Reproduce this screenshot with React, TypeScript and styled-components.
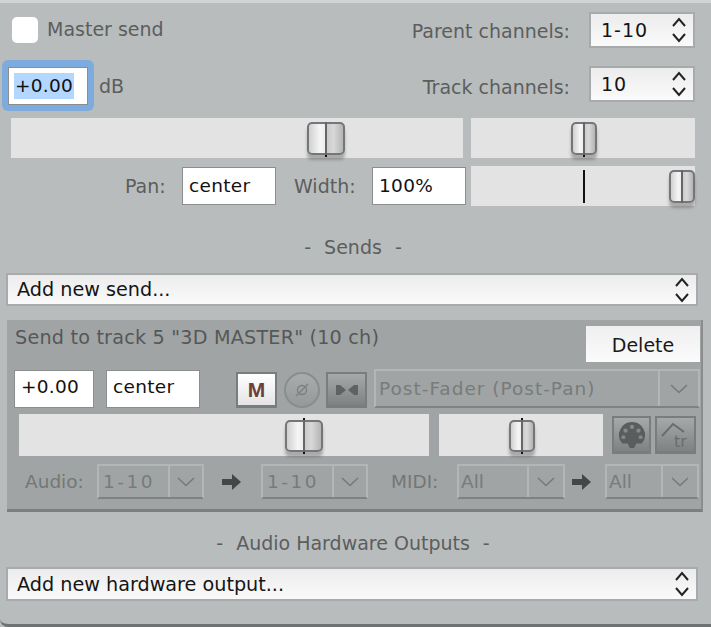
import React from 'react';
import styled, { createGlobalStyle } from 'styled-components';

const GlobalStyle = createGlobalStyle`
  html, body {
    margin: 0;
    padding: 0;
    background: #b9bcbc;
  }
  body {
    font-family: "DejaVu Sans", "Open Sans", sans-serif;
    font-size: 19px;
  }
`;

const Window = styled.div`
  position: relative;
  width: 711px;
  height: 627px;
  box-sizing: border-box;
  overflow: hidden;
  background: #b9bcbc;
  border-top: 3px solid #d2d3d3;
  padding-top: 9px;
`;

const BottomEdge = styled.div`
  position: absolute;
  left: 0;
  right: 0;
  bottom: 0;
  height: 12px;
  border-bottom: 3px solid #6f7272;
  border-bottom-left-radius: 8px;
  box-sizing: border-box;
`;

const TopRows = styled.div`
  display: grid;
  grid-template-columns: 1fr auto;
  column-gap: 0;
`;

const Row = styled.div<{ $h: number; $mt?: number; $pl?: number; $pr?: number }>`
  display: flex;
  align-items: center;
  height: ${p => p.$h}px;
  margin-top: ${p => p.$mt ?? 0}px;
  padding-left: ${p => p.$pl ?? 0}px;
  padding-right: ${p => p.$pr ?? 0}px;
  box-sizing: border-box;
`;

const Spacer = styled.div`
  flex: 1;
`;

const Checkbox = styled.div`
  width: 26px;
  height: 26px;
  background: #fff;
  border-radius: 5px;
  margin-right: 9px;
`;

const Label = styled.span<{ $ml?: number; $w?: number; $pt?: number; $pb?: number }>`
  color: #5b5e5e;
  font-size: 19px;
  margin-left: ${p => p.$ml ?? 0}px;
  padding-top: ${p => p.$pt ?? 0}px;
  padding-bottom: ${p => p.$pb ?? 0}px;
  white-space: nowrap;
  flex: none;
  ${p => (p.$w ? `width: ${p.$w}px;` : '')}
`;

const FocusRing = styled.div`
  width: 92px;
  height: 51px;
  box-sizing: border-box;
  margin-left: 2px;
  padding: 7px 6px 6px;
  background: #7dabde;
  border-radius: 6px;
`;

const Field = styled.div<{ $w: number; $h?: number; $ml?: number; $pb?: number }>`
  width: ${p => p.$w}px;
  height: ${p => p.$h ?? 38}px;
  margin-left: ${p => p.$ml ?? 0}px;
  box-sizing: border-box;
  flex: none;
  display: flex;
  align-items: center;
  padding: 0 0 ${p => p.$pb ?? 2}px 6px;
  background: #fff;
  border: 1px solid #8b8e8e;
  color: #111;
  font-size: 18.5px;
  letter-spacing: 0.3px;
`;

const Selected = styled.span`
  background: #b3d7ff;
  line-height: 26px;
  padding: 0 1px;
  margin-left: -1px;
`;

const Stepper = () => (
  <svg width="16" height="28" viewBox="0 0 16 28" fill="none" stroke="#222" strokeWidth="2">
    <path d="M2 10 L8 3 L14 10" />
    <path d="M2 18 L8 25 L14 18" />
  </svg>
);

const SelectBox = styled.div<{ $w?: number; $h: number; $ml?: number; $spacing?: number }>`
  width: ${p => (p.$w ? `${p.$w}px` : 'auto')};
  height: ${p => p.$h}px;
  margin-left: ${p => p.$ml ?? 0}px;
  box-sizing: border-box;
  flex: none;
  display: flex;
  align-items: center;
  justify-content: space-between;
  padding: 0 6px 0 10px;
  background: linear-gradient(#ececec, #fafafa);
  border: 2px solid #a8abab;
  color: #151515;
  font-size: 19px;
  letter-spacing: ${p => p.$spacing ?? 0}px;
`;

const Track = styled.div<{ $w: number; $h?: number; $ml?: number }>`
  position: relative;
  width: ${p => p.$w}px;
  height: ${p => p.$h ?? 40}px;
  margin-left: ${p => p.$ml ?? 0}px;
  flex: none;
  background: #e3e3e3;
`;

const Thumb = styled.div<{ $w: number; $x: number; $top?: number; $h?: number }>`
  position: absolute;
  left: ${p => p.$x}px;
  top: ${p => p.$top ?? 4}px;
  width: ${p => p.$w}px;
  height: ${p => p.$h ?? 33}px;
  box-sizing: border-box;
  border: 2px solid #747777;
  border-radius: 5px;
  background: linear-gradient(90deg, #d0d0d0, #f5f5f5 32%, #ececec 48%, #cacaca 52%, #d8d8d8 72%, #b4b4b4);
  box-shadow: 0 5px 3px 0 rgba(90, 90, 90, 0.42);

  &::after {
    content: '';
    position: absolute;
    left: 50%;
    top: -2px;
    bottom: -2px;
    width: 2px;
    margin-left: -1px;
    background: #666;
  }
`;

const Tick = styled.div<{ $x: number; $top: number; $h: number; $w?: number }>`
  position: absolute;
  left: ${p => p.$x}px;
  top: ${p => p.$top}px;
  width: ${p => p.$w ?? 2}px;
  height: ${p => p.$h}px;
  background: #111;
  z-index: 1;
`;

const SectionTitle = styled.div<{ $mt: number }>`
  margin-top: ${p => p.$mt}px;
  padding-right: 5px;
  height: 24px;
  line-height: 24px;
  text-align: center;
  color: #5b5e5e;
  font-size: 19px;
`;

const Dash = styled.span`
  margin: 0 13px;
`;

const WideSelect = styled(SelectBox)`
  margin-left: 6px;
  width: 692px;
  padding-left: 9px;
  font-size: 19.2px;
`;

const Panel = styled.div`
  margin: 14px 0 0 7px;
  width: 696px;
  height: 192px;
  box-sizing: border-box;
  background: #a1a4a4;
  border-right: 2px solid #8a8d8d;
  border-bottom: 3px solid #7c7f7f;
  padding-top: 6px;
  position: relative;
`;

const PanelTitle = styled.div`
  height: 36px;
  padding-left: 8px;
  line-height: 24px;
  color: #555858;
  font-size: 19.2px;
  letter-spacing: 0.2px;
  display: flex;
  justify-content: space-between;
`;

const DeleteButton = styled.button`
  width: 114px;
  height: 36px;
  margin-right: 1px;
  border: none;
  padding: 2px 0 0;
  background: linear-gradient(#efefef, #fbfbfb);
  color: #1a1a1a;
  font: inherit;
  font-size: 19px;
  letter-spacing: 0;
`;

const SquareButton = styled.div<{ $w: number; $h?: number; $ml: number; $mt?: number; $on?: boolean }>`
  width: ${p => p.$w}px;
  height: ${p => p.$h ?? 36}px;
  margin-left: ${p => p.$ml}px;
  margin-top: ${p => p.$mt ?? 0}px;
  flex: none;
  box-sizing: border-box;
  display: flex;
  align-items: center;
  justify-content: center;
  border: 2px solid #7a7d7d;
  border-bottom-width: 3px;
  background: ${p => (p.$on ? 'linear-gradient(#fff, #e4e4e4)' : 'linear-gradient(#a6a9a9, #7f8282)')};
`;

const RoundButton = styled.div`
  width: 36px;
  height: 36px;
  margin-left: 7px;
  margin-top: 3px;
  flex: none;
  box-sizing: border-box;
  border-radius: 50%;
  border: 2px solid #8a8d8d;
  background: linear-gradient(#a9acac, #969999);
  display: flex;
  align-items: center;
  justify-content: center;
`;

const MuteLetter = styled.span`
  color: #6b4036;
  font-weight: 700;
  font-size: 21px;
  font-family: "Liberation Sans", sans-serif;
`;

const GraySelect = styled.div<{ $w: number; $ml: number; $h?: number; $arrow?: number }>`
  width: ${p => p.$w}px;
  height: ${p => p.$h ?? 35}px;
  margin-left: ${p => p.$ml}px;
  flex: none;
  box-sizing: border-box;
  display: grid;
  grid-template-columns: 1fr ${p => p.$arrow ?? 36}px;
  border: 2px solid #b3b6b6;
  border-bottom-color: #7f8282;
  color: #787b7b;
  font-size: 18.5px;
`;

const GrayValue = styled.div<{ $pl?: number; $spacing?: number }>`
  display: flex;
  align-items: center;
  padding-left: ${p => p.$pl ?? 4}px;
  letter-spacing: ${p => p.$spacing ?? 0}px;
  white-space: nowrap;
  overflow: hidden;
`;

const GrayArrow = styled.div`
  display: flex;
  align-items: center;
  justify-content: center;
  border-left: 2px solid #b3b6b6;
`;

const Chevron = () => (
  <svg width="20" height="10" viewBox="0 0 20 10" fill="none" stroke="#767979" strokeWidth="1.5">
    <path d="M2 1 L10 8.5 L18 1" />
  </svg>
);

const ArrowIcon = styled.svg<{ $ml: number }>`
  margin-left: ${p => p.$ml}px;
  flex: none;
`;

const RightArrow: React.FC<{ ml: number }> = ({ ml }) => (
  <ArrowIcon $ml={ml} width="20" height="16" viewBox="0 0 20 16">
    <path d="M0 5 H10 V0 L19 8 L10 16 V11 H0 Z" fill="#444747" />
  </ArrowIcon>
);

const GrayLabel = styled.span<{ $ml: number; $w: number }>`
  margin-left: ${p => p.$ml}px;
  width: ${p => p.$w}px;
  flex: none;
  color: #747777;
  font-size: 18.5px;
  white-space: nowrap;
`;

export default function App() {
  return (
    <>
      <GlobalStyle />
      <Window>
        <TopRows>
          <div>
            <Row $h={36} $pl={12}>
              <Checkbox />
              <Label $pb={2}>Master send</Label>
            </Row>
            <Row $h={51} $mt={12}>
              <FocusRing>
                <Field $w={80} $h={38} $pb={1}>
                  <Selected>+0.00</Selected>
                </Field>
              </FocusRing>
              <Label $ml={5}>dB</Label>
            </Row>
          </div>
          <div>
            <Row $h={36} $pr={16}>
              <Spacer />
              <Label $pt={2}>Parent channels:</Label>
              <SelectBox $w={106} $h={36} $ml={19} $spacing={1}>
                1-10
                <Stepper />
              </SelectBox>
            </Row>
            <Row $h={36} $mt={18} $pr={16}>
              <Spacer />
              <Label $pt={5}>Track channels:</Label>
              <SelectBox $w={106} $h={36} $ml={19} $spacing={1}>
                10
                <Stepper />
              </SelectBox>
            </Row>
          </div>
        </TopRows>

        <Row $h={40} $mt={7}>
          <Track $w={452} $ml={11}>
            <Thumb $w={38} $x={296} />
            <Tick $x={314} $top={37} $h={2} />
          </Track>
          <Track $w={224} $ml={8}>
            <Thumb $w={26} $x={100} />
            <Tick $x={112} $top={37} $h={2} />
          </Track>
        </Row>

        <Row $h={40} $mt={8}>
          <Label $ml={125} $w={42}>Pan:</Label>
          <Field $w={94} $ml={15}>center</Field>
          <Label $ml={18} $w={62}>Width:</Label>
          <Field $w={94} $ml={16}>100%</Field>
          <Track $w={224} $ml={5}>
            <Tick $x={112} $top={4} $h={33} />
            <Thumb $w={26} $x={198} />
          </Track>
        </Row>

        <SectionTitle $mt={29}>
          <Dash>-</Dash>Sends<Dash>-</Dash>
        </SectionTitle>

        <Row $h={33} $mt={14}>
          <WideSelect $h={33}>
            Add new send...
            <Stepper />
          </WideSelect>
        </Row>

        <Panel>
          <PanelTitle>
            <span>Send to track 5 "3D MASTER" (10 ch)</span>
            <DeleteButton>Delete</DeleteButton>
          </PanelTitle>

          <Row $h={39} $mt={7}>
            <Field $w={80} $h={38} $ml={7} $pb={4}>+0.00</Field>
            <Field $w={94} $h={38} $ml={12} $pb={4}>center</Field>
            <SquareButton $w={41} $ml={36} $mt={3} $on>
              <MuteLetter>M</MuteLetter>
            </SquareButton>
            <RoundButton>
              <svg width="22" height="22" viewBox="0 0 22 22" fill="none" stroke="#7b7e7e" strokeWidth="1.3">
                <circle cx="11" cy="11" r="4.5" />
                <path d="M5 17 L17 5" />
              </svg>
            </RoundButton>
            <SquareButton $w={41} $ml={6} $mt={3}>
              <svg width="22" height="16" viewBox="0 0 22 16" fill="#5f6262">
                <path d="M0 3 H4 L10 8 L4 13 H0 Z" />
                <path d="M22 3 H18 L12 8 L18 13 H22 Z" />
              </svg>
            </SquareButton>
            <GraySelect $w={326} $h={39} $ml={7} $arrow={40}>
              <GrayValue $pl={3} $spacing={1}>Post-Fader (Post-Pan)</GrayValue>
              <GrayArrow><Chevron /></GrayArrow>
            </GraySelect>
          </Row>

          <Row $h={42} $mt={6}>
            <Track $w={410} $h={42} $ml={12}>
              <Thumb $w={38} $x={266} $top={6} $h={32} />
              <Tick $x={284} $top={4} $h={2} />
              <Tick $x={284} $top={38} $h={2} />
            </Track>
            <Track $w={164} $h={42} $ml={10}>
              <Thumb $w={26} $x={70} $top={6} $h={32} />
              <Tick $x={82} $top={4} $h={2} />
              <Tick $x={82} $top={38} $h={2} />
            </Track>
            <SquareButton $w={39} $h={38} $ml={9}>
              <svg width="28" height="28" viewBox="0 0 26 26" fill="#5a5d5d">
                <path d="M13 1 A12 12 0 0 1 22 21 L17 21 L15 25 L11 25 L9 21 L4 21 A12 12 0 0 1 13 1 Z" />
                <circle cx="13" cy="5.5" r="2" fill="#868989" />
                <circle cx="7" cy="9" r="2" fill="#868989" />
                <circle cx="19" cy="9" r="2" fill="#868989" />
                <circle cx="5" cy="15" r="1.8" fill="#868989" />
                <circle cx="21" cy="15" r="1.8" fill="#868989" />
              </svg>
            </SquareButton>
            <SquareButton $w={41} $h={38} $ml={4}>
              <svg width="34" height="32" viewBox="0 0 34 32" fill="none" stroke="#6a6d6d" strokeWidth="2">
                <path d="M3 17 L14 5 L25 13" />
                <text x="15" y="28" fontSize="16" fill="#6a6d6d" stroke="none" fontFamily="DejaVu Sans, sans-serif">tr</text>
              </svg>
            </SquareButton>
          </Row>

          <Row $h={35} $mt={8}>
            <GrayLabel $ml={18} $w={62}>Audio:</GrayLabel>
            <GraySelect $w={107} $ml={10} $arrow={34}>
              <GrayValue $spacing={2.5}>1-10</GrayValue>
              <GrayArrow><Chevron /></GrayArrow>
            </GraySelect>
            <RightArrow ml={18} />
            <GraySelect $w={107} $ml={19} $arrow={34}>
              <GrayValue $spacing={2.5}>1-10</GrayValue>
              <GrayArrow><Chevron /></GrayArrow>
            </GraySelect>
            <GrayLabel $ml={23} $w={50}>MIDI:</GrayLabel>
            <GraySelect $w={108} $ml={16}>
              <GrayValue $pl={2}>All</GrayValue>
              <GrayArrow><Chevron /></GrayArrow>
            </GraySelect>
            <RightArrow ml={7} />
            <GraySelect $w={94} $ml={13}>
              <GrayValue $pl={2}>All</GrayValue>
              <GrayArrow><Chevron /></GrayArrow>
            </GraySelect>
          </Row>
        </Panel>

        <SectionTitle $mt={19}>
          <Dash>-</Dash>Audio Hardware Outputs<Dash>-</Dash>
        </SectionTitle>

        <Row $h={34} $mt={12}>
          <WideSelect $h={34}>
            Add new hardware output...
            <Stepper />
          </WideSelect>
        </Row>

        <BottomEdge />
      </Window>
    </>
  );
}
